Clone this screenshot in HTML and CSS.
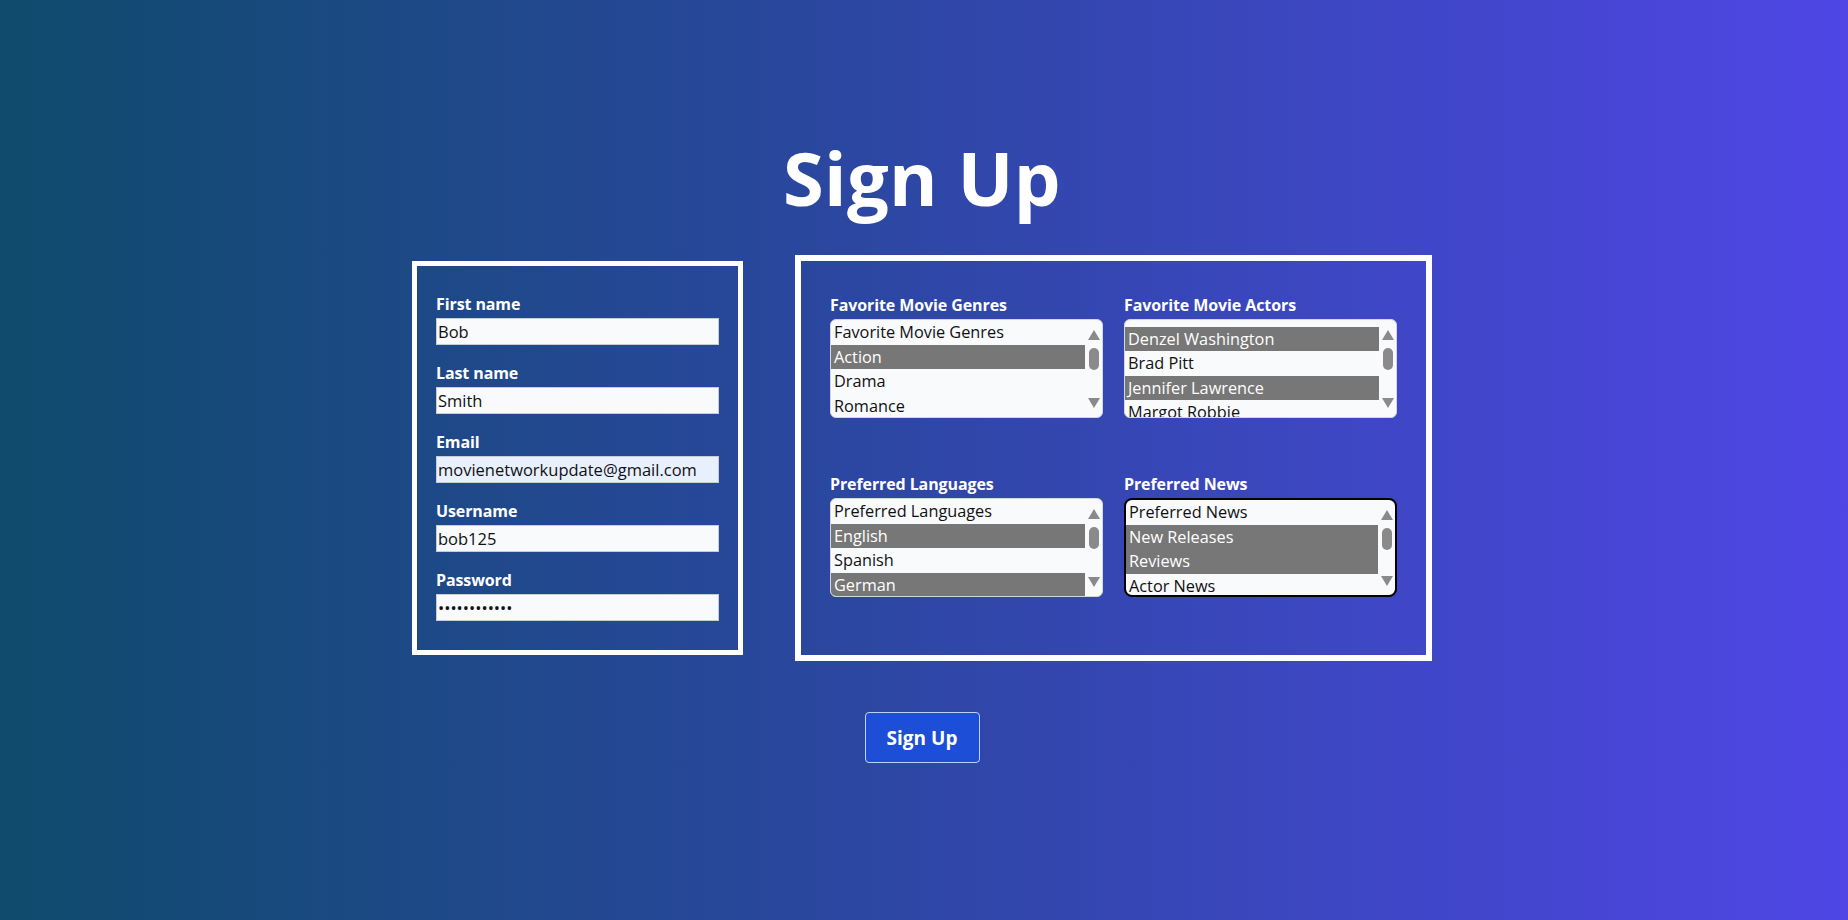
FILE: index.html
```html
<!DOCTYPE html>
<html lang="en">
<head>
<meta charset="utf-8">
<title>Sign Up</title>
<link rel="stylesheet" href="styles.css">
</head>
<body>
<main class="page">
  <h1 class="title">Sign Up</h1>
  <form class="form">
    <div class="row">
      <section class="box box-left">
        <div class="field">
          <label class="label">First name</label>
          <input class="input" type="text" value="Bob">
        </div>
        <div class="field">
          <label class="label">Last name</label>
          <input class="input" type="text" value="Smith">
        </div>
        <div class="field">
          <label class="label">Email</label>
          <input class="input input-auto" type="text" value="movienetworkupdate@gmail.com">
        </div>
        <div class="field">
          <label class="label">Username</label>
          <input class="input" type="text" value="bob125">
        </div>
        <div class="field">
          <label class="label">Password</label>
          <input class="input" type="password" value="bobbobbob125">
        </div>
      </section>

      <section class="box box-right">
        <div class="cell">
          <div class="label">Favorite Movie Genres</div>
          <div class="listbox">
            <div class="options">
              <div class="opt">Favorite Movie Genres</div>
              <div class="opt sel">Action</div>
              <div class="opt">Drama</div>
              <div class="opt">Romance</div>
            </div>
            <div class="scroll"><span class="up"></span><span class="thumb"></span><span class="down"></span></div>
          </div>
        </div>
        <div class="cell">
          <div class="label">Favorite Movie Actors</div>
          <div class="listbox">
            <div class="options scrolled">
              <div class="opt hidden-opt">Favorite Movie Actors</div>
              <div class="opt sel">Denzel Washington</div>
              <div class="opt">Brad Pitt</div>
              <div class="opt sel">Jennifer Lawrence</div>
              <div class="opt">Margot Robbie</div>
            </div>
            <div class="scroll"><span class="up"></span><span class="thumb"></span><span class="down"></span></div>
          </div>
        </div>
        <div class="cell">
          <div class="label">Preferred Languages</div>
          <div class="listbox">
            <div class="options">
              <div class="opt">Preferred Languages</div>
              <div class="opt sel">English</div>
              <div class="opt">Spanish</div>
              <div class="opt sel">German</div>
            </div>
            <div class="scroll"><span class="up"></span><span class="thumb"></span><span class="down"></span></div>
          </div>
        </div>
        <div class="cell">
          <div class="label">Preferred News</div>
          <div class="listbox focused">
            <div class="options">
              <div class="opt">Preferred News</div>
              <div class="opt sel">New Releases</div>
              <div class="opt sel">Reviews</div>
              <div class="opt">Actor News</div>
            </div>
            <div class="scroll"><span class="up"></span><span class="thumb"></span><span class="down"></span></div>
          </div>
        </div>
      </section>
    </div>
    <div class="actions">
      <button class="btn" type="button">Sign Up</button>
    </div>
  </form>
</main>
</body>
</html>
```

FILE: styles.css
```css
* { box-sizing: border-box; }

html, body {
  margin: 0;
  padding: 0;
  height: 100%;
}

body {
  background: linear-gradient(to right, #0f4b6c 0%, #2b47a0 45%, #4f46e5 100%);
  font-family: "Open Sans", "Noto Sans", sans-serif;
  color: #fff;
  overflow: hidden;
}

.page {
  display: flex;
  flex-direction: column;
  align-items: center;
  padding-top: 130px;
  padding-right: 4px;
}

.title {
  margin: 0;
  font-size: 74px;
  line-height: 96px;
  font-weight: 700;
  color: #fff;
  letter-spacing: 0.3px;
}

.form {
  display: flex;
  flex-direction: column;
  align-items: center;
  margin-top: 29px;
}

.row {
  display: flex;
  align-items: center;
  gap: 52px;
}

.box {
  border: 5px solid #fff;
}

.box-left {
  width: 331px;
  padding: 27px 19px 29px 19px;
  display: flex;
  flex-direction: column;
  gap: 17px;
}

.field {
  display: flex;
  flex-direction: column;
}

.label {
  display: block;
  font-size: 16px;
  line-height: 22px;
  font-weight: 700;
  color: #fff;
  margin-bottom: 3px;
  letter-spacing: -0.1px;
}

.input {
  height: 27px;
  width: 283px;
  border: 1px solid #c9ccd3;
  background: #f8fafc;
  color: #111;
  font-family: "Open Sans", "Noto Sans", sans-serif;
  font-size: 16.5px;
  padding: 0 1px;
  margin: 0;
  outline: none;
  border-radius: 0;
}

.input-auto {
  background: #e8f0fe;
}

.box-right {
  width: 637px;
  border-width: 6px;
  padding: 33px 29px 58px 29px;
  display: grid;
  grid-template-columns: 273px 273px;
  column-gap: 21px;
  row-gap: 55px;
}

.cell {
  display: flex;
  flex-direction: column;
}

.listbox {
  height: 99px;
  border: 1px solid #d3d6dc;
  border-radius: 6px;
  background: #f8fafc;
  display: flex;
  overflow: hidden;
}

.listbox.focused {
  border: 2px solid #000;
  border-radius: 8px;
}

.options {
  flex: 1;
  display: flex;
  flex-direction: column;
  min-width: 0;
}

.options.scrolled {
  margin-top: -18px;
}

.opt {
  height: 24.5px;
  flex: none;
  line-height: 24px;
  padding-left: 3px;
  font-size: 16.3px;
  color: #111;
  white-space: nowrap;
}

.opt.hidden-opt {
  visibility: hidden;
}

.opt.sel {
  background: #777777;
  color: #fff;
}

.scroll {
  width: 17px;
  flex: none;
  display: flex;
  flex-direction: column;
  align-items: center;
  padding: 10px 0 9px 0;
}

.up, .down {
  width: 0;
  height: 0;
  border-left: 6.5px solid transparent;
  border-right: 6.5px solid transparent;
}

.up {
  border-bottom: 10px solid #8a8a8a;
}

.down {
  border-top: 10px solid #8a8a8a;
  margin-top: auto;
}

.thumb {
  width: 10px;
  height: 22px;
  border-radius: 5px;
  background: #8a8a8a;
  margin-top: 8px;
}

.actions {
  margin-top: 51px;
}

.btn {
  width: 115px;
  height: 51px;
  background: #1d4ed8;
  color: #fff;
  border: 1px solid #bfd3f7;
  border-radius: 4px;
  font-family: "Open Sans", "Noto Sans", sans-serif;
  font-size: 19px;
  font-weight: 700;
  cursor: pointer;
}
```
